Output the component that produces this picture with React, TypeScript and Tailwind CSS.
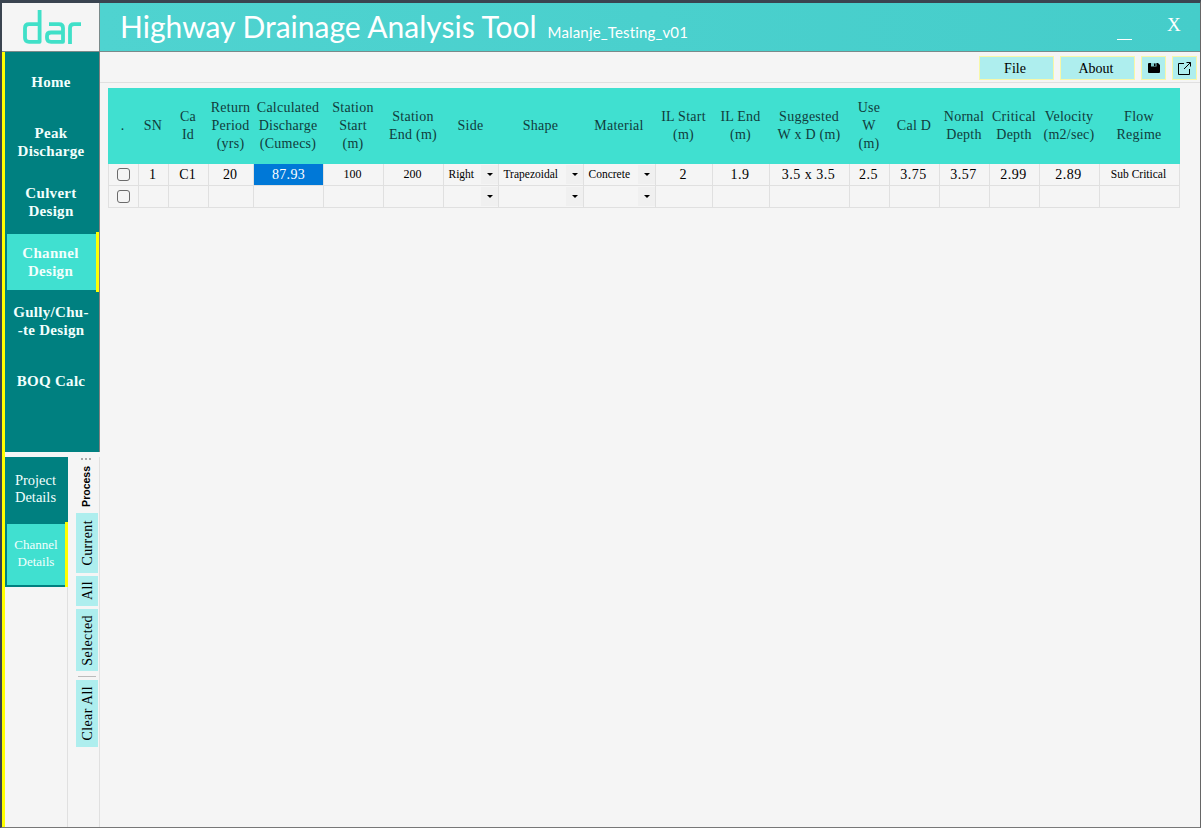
import type { ReactNode } from "react";

const headers: { w: number; t: string[] }[] = [
  { w: 31, t: ["."] },
  { w: 30, t: ["SN"] },
  { w: 40, t: ["Ca", "Id"] },
  { w: 45, t: ["Return", "Period", "(yrs)"] },
  { w: 70, t: ["Calculated", "Discharge", "(Cumecs)"] },
  { w: 60, t: ["Station", "Start", "(m)"] },
  { w: 60, t: ["Station", "End (m)"] },
  { w: 55, t: ["Side"] },
  { w: 85, t: ["Shape"] },
  { w: 72, t: ["Material"] },
  { w: 57, t: ["IL Start", "(m)"] },
  { w: 57, t: ["IL End", "(m)"] },
  { w: 80, t: ["Suggested", "W x D (m)"] },
  { w: 40, t: ["Use", "W", "(m)"] },
  { w: 50, t: ["Cal D"] },
  { w: 50, t: ["Nornal", "Depth"] },
  { w: 50, t: ["Critical", "Depth"] },
  { w: 60, t: ["Velocity", "(m2/sec)"] },
  { w: 80, t: ["Flow", "Regime"] },
];

function Caret() {
  return (
    <span className="flex h-[19px] w-[17px] shrink-0 items-center justify-center bg-[#f0f0f0]">
      <span className="h-0 w-0 border-x-[3px] border-t-[3px] border-x-transparent border-t-black" />
    </span>
  );
}

function SelectCell({ text }: { text?: string }) {
  return (
    <td className="h-[22px] border-r border-b border-[#e0e0e0] p-0">
      <div className="flex h-[21px] items-center justify-between pl-[4.5px] text-[11.5px] text-black">
        <span className="pb-[2px]">{text}</span>
        <Caret />
      </div>
    </td>
  );
}

function Cell({ children, cls = "text-[14px]" }: { children?: ReactNode; cls?: string }) {
  return (
    <td className={`h-[22px] border-r border-b border-[#e0e0e0] p-0 pr-[2px] text-center text-black ${cls}`}>{children}</td>
  );
}

function CheckCell() {
  return (
    <td className="h-[22px] border-x border-b border-[#e0e0e0] p-0 text-center">
      <span className="mx-auto block h-[13px] w-[13px] rounded-[3px] border border-[#6b6b6b] bg-[#f5f5f5]" />
    </td>
  );
}

function NavItem({ lines, h }: { lines: string[]; h: string }) {
  return (
    <div className={`flex items-center justify-center pr-[2px] text-center text-[15px] leading-[18px] font-bold tracking-[0.3px] text-[#f2fffd] ${h}`}>
      <span>
        {lines.map((l) => (
          <span key={l} className="block">{l}</span>
        ))}
      </span>
    </div>
  );
}

function SideTab({ children, h }: { children: ReactNode; h: string }) {
  return (
    <div className={`flex w-[22px] items-center justify-center bg-[#aeeeee] ${h}`}>
      <span className="rotate-180 text-[14px] tracking-[0.4px] text-black [writing-mode:vertical-rl]">{children}</span>
    </div>
  );
}

function TopBtn({ children, w, cls = "" }: { children: ReactNode; w: string; cls?: string }) {
  return (
    <div className={`flex h-[24px] items-center justify-center border border-[#f7f7a8] bg-[#aeeeee] text-[14px] text-black ${w} ${cls}`}>
      {children}
    </div>
  );
}

export default function App() {
  return (
    <div className="flex h-[828px] w-[1201px] flex-col overflow-hidden border-t-[3px] border-r border-b border-l-2 border-[#3a4450] border-r-[#666] border-b-[#777] bg-[#f5f5f5] font-['Liberation_Serif',serif]">
      <header className="flex h-[49px] shrink-0 border-b border-[#7a8a8a]">
        <div className="flex w-[98px] shrink-0 items-center justify-center border-r border-[#7a8a8a] bg-[#f5f5f5] pl-[3px]">
          <svg width="58" height="34" viewBox="0 0 58 34" fill="none" stroke="#40e0c8" strokeWidth="3.8" strokeLinecap="butt" strokeLinejoin="round">
            <path d="M16.6 0V31.8H6Q2 31.8 2 28V18Q2 14.2 6 14.2H16.6" />
            <path d="M26 14.2H36Q40 14.2 40 18V31.8H28Q24 31.8 24 28V26Q24 22.5 28 22.5H40" />
            <path d="M47 34V18Q47 14.2 51 14.2H58" />
          </svg>
        </div>
        <div className="flex flex-1 bg-[linear-gradient(to_right,#4fd3d0,#45cdca)] text-white">
          <div className="flex flex-1 items-baseline pt-[4px] pl-[20px] font-['Lato',sans-serif]">
            <span className="text-[30px] leading-[38px]">Highway Drainage Analysis Tool</span>
            <span className="ml-[11px] text-[15px] tracking-[0.15px]">Malanje_Testing_v01</span>
          </div>
          <div className="relative w-[100px]">
            <span className="absolute top-[36px] left-[17px] h-px w-[15px] bg-white" />
            <span className="absolute top-[10px] left-[67px] text-[19px] leading-[24px]">X</span>
          </div>
        </div>
      </header>
      <div className="flex min-h-0 flex-1">
        <aside className="flex w-[98px] shrink-0 flex-col border-l-[3px] border-[#ffff00]">
          <nav className="flex h-[400px] shrink-0 flex-col border-r border-[#808080] bg-[#008080]">
            <NavItem lines={["Home"]} h="h-[60px]" />
            <NavItem lines={["Peak", "Discharge"]} h="h-[60px]" />
            <NavItem lines={["Culvert", "Design"]} h="h-[60px]" />
            <div className="flex h-[60px] items-center pl-[2px]">
              <div className="h-[56px] flex-1 bg-[#40e0d0]">
                <NavItem lines={["Channel", "Design"]} h="h-[56px]" />
              </div>
              <div className="h-[60px] w-[3px] bg-[#ffff00]" />
            </div>
            <NavItem lines={["Gully/Chu-", "-te Design"]} h="h-[58px]" />
            <NavItem lines={["BOQ Calc"]} h="h-[62px]" />
          </nav>
          <div className="flex min-h-0 flex-1 pt-[5px]">
            <div className="w-[63px] shrink-0 border-r border-[#e0e0e0]">
              <div className="-mr-px flex flex-col bg-[#008080] text-center text-[14.5px] leading-[17px] text-[#f2fffd]">
                <div className="flex h-[65px] items-center justify-center pr-[2px] pb-[1px]">
                  <span>Project<br />Details</span>
                </div>
                <div className="flex h-[65px]">
                  <div className="my-[2px] ml-[2px] flex flex-1 items-center justify-center bg-[#40e0d0] pb-[3px] text-[13px] leading-[17px]">
                    <span>Channel<br />Details</span>
                  </div>
                  <div className="w-[3px] bg-[#ffff00]" />
                </div>
              </div>
            </div>
            <div className="flex w-[32px] shrink-0 flex-col items-start border-r border-[#e0e0e0] pt-px pl-[8px]">
              <div className="ml-[5px] h-[2px] w-[10px] border-t-2 border-dotted border-[#aaa]" />
              <div className="flex h-[53px] w-[22px] items-center justify-center">
                <span className="rotate-180 font-['Liberation_Sans',sans-serif] text-[10.5px] font-bold text-black [writing-mode:vertical-rl]">Process</span>
              </div>
              <SideTab h="h-[60px]">Current</SideTab>
              <div className="h-[3px]" />
              <SideTab h="h-[30px]">All</SideTab>
              <div className="h-[3px]" />
              <SideTab h="h-[62px]">Selected</SideTab>
              <div className="mt-[5px] mb-[3px] ml-[2px] h-px w-[18px] bg-[#bbb]" />
              <SideTab h="h-[67px]">Clear All</SideTab>
            </div>
          </div>
        </aside>
        <main className="flex min-w-0 flex-1 flex-col">
          <div className="flex h-[31px] shrink-0 items-start justify-end gap-[6px] border-b border-[#e0e0e0] pt-[4px] pr-[3px]">
            <TopBtn w="w-[75px]" cls="pr-[3px]">File</TopBtn>
            <TopBtn w="w-[75px]" cls="pr-[3px]">About</TopBtn>
            <TopBtn w="w-[25px]">
              <svg width="12" height="10" viewBox="0 0 12 10" fill="#000">
                <path d="M0 1Q0 0 1 0H10L12 2V9Q12 10 11 10H1Q0 10 0 9Z" />
                <rect x="3" y="0" width="5.5" height="3.5" fill="#7fc8c8" />
                <rect x="6" y="0.5" width="1.5" height="2.5" fill="#000" />
              </svg>
            </TopBtn>
            <TopBtn w="w-[25px]">
              <svg width="13" height="13" viewBox="0 0 13 13" fill="none" stroke="#000" strokeWidth="1">
                <path d="M6 1.5H0.5V12.5H11.5V7" />
                <path d="M6 7L12.5 0.5M8.5 0.5H12.5V4.5" />
              </svg>
            </TopBtn>
          </div>
          <div className="pt-[5px] pl-[8px]">
            <table className="w-[1072px] table-fixed border-separate border-spacing-0 text-[14px] leading-[18px]">
              <colgroup>
                {headers.map((h, i) => (
                  <col key={i} style={{ width: h.w }} />
                ))}
              </colgroup>
              <thead>
                <tr className="h-[76px] bg-[#40e0d0]">
                  {headers.map((h, i) => (
                    <th key={i} className="p-0 pr-[2px] text-center align-middle text-[14px] font-normal tracking-[0.25px] whitespace-nowrap text-[#103c3c]">
                      {h.t.map((l) => (
                        <span key={l} className="block">{l}</span>
                      ))}
                    </th>
                  ))}
                </tr>
              </thead>
              <tbody>
                <tr>
                  <CheckCell />
                  <Cell>1</Cell>
                  <Cell>C1</Cell>
                  <Cell>20</Cell>
                  <td className="h-[22px] border-r border-b border-[#e0e0e0] bg-[#0078d7] p-0 text-center text-[14px] tracking-[0.3px] text-white">87.93</td>
                  <Cell cls="pb-[1px] text-[12px]">100</Cell>
                  <Cell cls="pb-[1px] text-[12px]">200</Cell>
                  <SelectCell text="Right" />
                  <SelectCell text="Trapezoidal" />
                  <SelectCell text="Concrete" />
                  <Cell>2</Cell>
                  <Cell cls="text-[14px] tracking-[0.5px]">1.9</Cell>
                  <Cell cls="text-[14px] tracking-[0.5px]">3.5 x 3.5</Cell>
                  <Cell cls="text-[14px] tracking-[0.5px]">2.5</Cell>
                  <Cell cls="text-[14px] tracking-[0.5px]">3.75</Cell>
                  <Cell cls="text-[14px] tracking-[0.5px]">3.57</Cell>
                  <Cell cls="text-[14px] tracking-[0.5px]">2.99</Cell>
                  <Cell cls="text-[14px] tracking-[0.5px]">2.89</Cell>
                  <Cell cls="pb-[2px] text-[11.5px]">Sub Critical</Cell>
                </tr>
                <tr>
                  <CheckCell />
                  <Cell />
                  <Cell />
                  <Cell />
                  <Cell />
                  <Cell />
                  <Cell />
                  <SelectCell />
                  <SelectCell />
                  <SelectCell />
                  <Cell />
                  <Cell />
                  <Cell />
                  <Cell />
                  <Cell />
                  <Cell />
                  <Cell />
                  <Cell />
                  <Cell />
                </tr>
              </tbody>
            </table>
          </div>
        </main>
      </div>
    </div>
  );
}
